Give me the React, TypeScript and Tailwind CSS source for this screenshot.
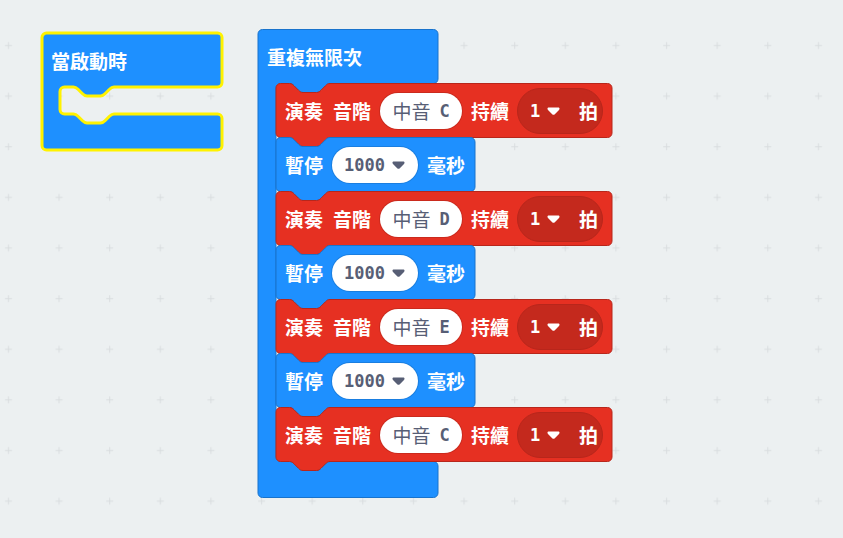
import type { ReactNode } from "react";

const NOTCH_RIGHT =
  "c2.25,0 3.4,1.1 4.5,2.25 l4.5,4.5 c1.1,1.1 2.25,2.25 4.5,2.25 h13.5 c2.25,0 3.4,-1.1 4.5,-2.25 l4.5,-4.5 c1.1,-1.1 2.25,-2.25 4.5,-2.25";
const NOTCH_LEFT =
  "c-2.25,0 -3.4,1.1 -4.5,2.25 l-4.5,4.5 c-1.1,1.1 -2.25,2.25 -4.5,2.25 h-13.5 c-2.25,0 -3.4,-1.1 -4.5,-2.25 l-4.5,-4.5 c-1.1,-1.1 -2.25,-2.25 -4.5,-2.25";

const CJK = "font-['Noto_Sans_CJK_TC',sans-serif]";
const MONO = "font-['DejaVu_Sans_Mono','Noto_Sans_CJK_TC',monospace]";

/* Outline of a C-shaped event block: 54px header, open mouth, 36px footer. */
function EventShape({ mouth, selected = false }: { mouth: number; selected?: boolean }) {
  const bottom = 54 + mouth;
  const d =
    `M0,4.5 a4.5,4.5 0 0 1 4.5,-4.5 H175.5 a4.5,4.5 0 0 1 4.5,4.5 V49.5 a4.5,4.5 0 0 1 -4.5,4.5 H72 ` +
    `${NOTCH_LEFT} H22.5 a4.5,4.5 0 0 0 -4.5,4.5 V${bottom - 4.5} a4.5,4.5 0 0 0 4.5,4.5 H31.5 ` +
    `${NOTCH_RIGHT} H175.5 a4.5,4.5 0 0 1 4.5,4.5 V${bottom + 31.5} a4.5,4.5 0 0 1 -4.5,4.5 H4.5 a4.5,4.5 0 0 1 -4.5,-4.5 z`;
  return (
    <svg className="absolute inset-0 size-full overflow-visible" aria-hidden="true">
      {selected ? (
        <path d={d} fill="#1e90ff" stroke="#fff200" strokeWidth="3" />
      ) : (
        <path d={d} fill="#1e90ff" stroke="#1873cc" transform="translate(0 0.5)" />
      )}
    </svg>
  );
}

function StatementShape({ width, fill, stroke }: { width: number; fill: string; stroke: string }) {
  const d =
    `M0,4.5 a4.5,4.5 0 0 1 4.5,-4.5 H13.5 ${NOTCH_RIGHT} H${width - 4.5} a4.5,4.5 0 0 1 4.5,4.5 ` +
    `V49.5 a4.5,4.5 0 0 1 -4.5,4.5 H54 ${NOTCH_LEFT} H4.5 a4.5,4.5 0 0 1 -4.5,-4.5 z`;
  return (
    <svg className="absolute inset-0 size-full overflow-visible" aria-hidden="true">
      <path d={d} fill={fill} stroke={stroke} transform="translate(0 0.5)" />
    </svg>
  );
}

function Caret({ className }: { className: string }) {
  return (
    <svg viewBox="0 0 13 8" className={className} aria-hidden="true">
      <path d="M2,0.5 H11 C12.6,0.5 13,1.9 12,2.9 L7.8,7.2 Q6.5,8.4 5.2,7.2 L1,2.9 C0,1.9 0.4,0.5 2,0.5 z" fill="currentColor" />
    </svg>
  );
}

function Label({ children }: { children: ReactNode }) {
  return <span className={`flex gap-[10px] whitespace-nowrap text-[19px] leading-6 font-bold text-white ${CJK}`}>{children}</span>;
}

function PlayTone({ note }: { note: string }) {
  return (
    <li className="relative flex h-[54px] w-[336px] items-center gap-2 px-[9px] pt-0.5">
      <StatementShape width={336} fill="#e63022" stroke="#b8261b" />
      <div className="relative flex items-center gap-[9px]">
        <Label>
          <span>演奏</span>
          <span>音階</span>
        </Label>
        <button
          type="button"
          className="flex h-9 w-[82px] items-center justify-center gap-[9px] rounded-full bg-white text-[#575e75] ring-1 ring-[#b8261b]/60"
        >
          <span className={`text-[19px] leading-6 ${CJK}`}>中音</span>
          <span className={`text-[17px] leading-6 font-bold ${MONO}`}>{note}</span>
        </button>
        <Label>持續</Label>
      </div>
      <div className="relative flex h-[46px] w-[86px] shrink-0 items-center justify-between rounded-full border border-[#b8261b] bg-[#c4291d] pr-1 text-white">
        <div className="relative flex items-center">
          <select
            aria-label="持續拍數"
            defaultValue="1"
            className={`h-8 w-[46px] appearance-none rounded-full bg-transparent pl-3 text-[17px] leading-6 font-bold ${MONO}`}
          >
            <option>1</option>
            <option>2</option>
            <option>4</option>
          </select>
          <Caret className="pointer-events-none absolute right-1 h-2 w-[13px]" />
        </div>
        <Label>拍</Label>
      </div>
    </li>
  );
}

function Pause() {
  return (
    <li className="relative flex h-[54px] w-[199px] items-center px-[9px] pt-0.5">
      <StatementShape width={199} fill="#1e90ff" stroke="#1873cc" />
      <div className="relative flex items-center gap-[9px]">
        <Label>暫停</Label>
        <div className="relative flex items-center text-[#575e75]">
          <select
            aria-label="暫停毫秒"
            defaultValue="1000"
            className={`h-9 w-[86px] appearance-none rounded-full bg-white pl-3 text-[17px] leading-6 font-bold ring-1 ring-[#1873cc]/60 ${MONO}`}
          >
            <option>100</option>
            <option>500</option>
            <option>1000</option>
          </select>
          <Caret className="pointer-events-none absolute right-[13px] h-2 w-[13px]" />
        </div>
        <Label>毫秒</Label>
      </div>
    </li>
  );
}

export default function App() {
  return (
    <main className="relative min-h-screen overflow-hidden bg-[#ecf0f1]">
      <svg className="absolute inset-0 size-full" aria-hidden="true">
        <defs>
          <pattern id="grid" x="-17" y="20" width="50.625" height="50.625" patternUnits="userSpaceOnUse">
            <path d="M22,25.5 h7 M25.5,22 v7" stroke="#d9dddf" strokeWidth="1" />
          </pattern>
        </defs>
        <rect width="100%" height="100%" fill="url(#grid)" />
      </svg>

      <section aria-label="當啟動時" className="absolute top-[33px] left-[42px] h-[117px] w-[180px]">
        <EventShape mouth={27} selected />
        <div className="relative flex h-[54px] items-center px-[9px] pt-0.5">
          <Label>當啟動時</Label>
        </div>
      </section>

      <section aria-label="重複無限次" className="absolute top-[29px] left-[258px] w-[180px] pb-9">
        <EventShape mouth={378} />
        <div className="relative flex h-[54px] items-center px-[9px] pt-0.5">
          <Label>重複無限次</Label>
        </div>
        <ul className="relative ml-[18px] flex flex-col">
          <PlayTone note="C" />
          <Pause />
          <PlayTone note="D" />
          <Pause />
          <PlayTone note="E" />
          <Pause />
          <PlayTone note="C" />
        </ul>
      </section>
    </main>
  );
}
